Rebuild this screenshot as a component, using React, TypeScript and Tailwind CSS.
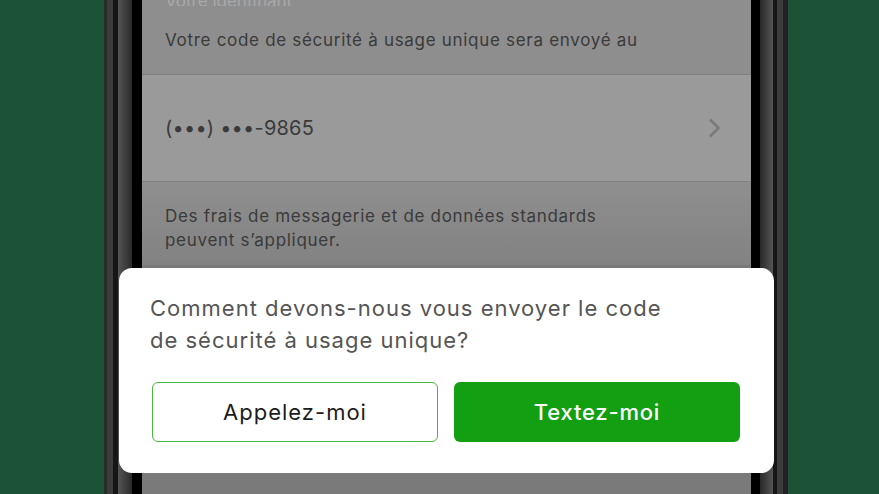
import React from "react";

const Band = ({ className }: { className: string }) => <div className={`h-full shrink-0 ${className}`} />;

export default function App() {
  return (
    <div
      className="relative w-[879px] h-[494px] overflow-hidden bg-[#1c5337] flex"
      style={{ fontFamily: "Inter, 'Noto Sans', sans-serif" }}
    >
      {/* left bezel */}
      <div className="w-[104px] shrink-0" />
      <Band className="w-[3px] bg-[#2b2b2b]" />
      <Band className="w-[6px] bg-[#3c3c3c]" />
      <Band className="w-[5px] bg-[#161616]" />
      <Band className="w-[14px] bg-gradient-to-r from-[#555] to-[#2a2a2a]" />
      <Band className="w-[10px] bg-black" />

      {/* screen (dimmed behind sheet) */}
      <div className="w-[609px] shrink-0 h-full flex flex-col bg-[#8e8e8e] text-[#3a3a3a]">
        <div className="h-[74px] shrink-0 flex flex-col px-[23px]">
          <div className="h-[6px] overflow-hidden text-[17px] leading-[6px] text-[#a8a8a8]">
            <span className="block -mt-[10px] leading-[22px]">Votre identifiant</span>
          </div>
          <div className="mt-[23px] text-[17px] leading-[22px] tracking-[0.7px]">
            Votre code de sécurité à usage unique sera envoyé au
          </div>
        </div>
        <div className="h-[1px] bg-[#7f7f7f]" />
        <div className="h-[106px] shrink-0 bg-[#9a9a9a] flex items-center justify-between pl-[23px] pr-[30px]">
          <span className="text-[20px] tracking-[0.2px]">(•••) •••-9865</span>
          <svg width="14" height="22" viewBox="0 0 14 22" fill="none">
            <path d="M3 2.5 L11.5 11 L3 19.5" stroke="#7a7a7a" strokeWidth="2.6" />
          </svg>
        </div>
        <div className="h-[1px] bg-[#828282]" />
        <div className="h-[83px] shrink-0 bg-gradient-to-b from-[#8f8f8f] to-[#828282] px-[23px] pt-[22px] text-[17px] leading-[24px] tracking-[0.7px]">
          Des frais de messagerie et de données standards
          <br />
          peuvent s’appliquer.
        </div>
        <div className="flex-1 bg-[#7a7a7a]" />
      </div>

      {/* right bezel */}
      <Band className="w-[9px] bg-black" />
      <Band className="w-[13px] bg-gradient-to-r from-[#2a2a2a] to-[#555]" />
      <Band className="w-[4px] bg-[#161616]" />
      <Band className="w-[6px] bg-[#3c3c3c]" />
      <Band className="w-[5px] bg-[#222]" />
      <div className="flex-1" />

      {/* bottom sheet */}
      <div className="absolute left-[119px] top-[268px] w-[655px] h-[205px] bg-white rounded-[13px] px-[31px] pt-[24px]">
        <p className="text-[22px] leading-[32px] text-[#555] tracking-[1px]">
          Comment devons-nous vous envoyer le code
          <br />
          de sécurité à usage unique?
        </p>
        <div className="mt-[26px] pl-[2px] flex gap-[16px]">
          <button className="w-[286px] h-[60px] rounded-[6px] border-[1.5px] border-[#45b93a] bg-white text-[22px] tracking-[1px] text-[#1d1d1d]">
            Appelez-moi
          </button>
          <button className="w-[286px] h-[60px] rounded-[6px] bg-[#12a012] text-[22px] font-medium tracking-[0.8px] text-white">
            Textez-moi
          </button>
        </div>
      </div>
    </div>
  );
}
